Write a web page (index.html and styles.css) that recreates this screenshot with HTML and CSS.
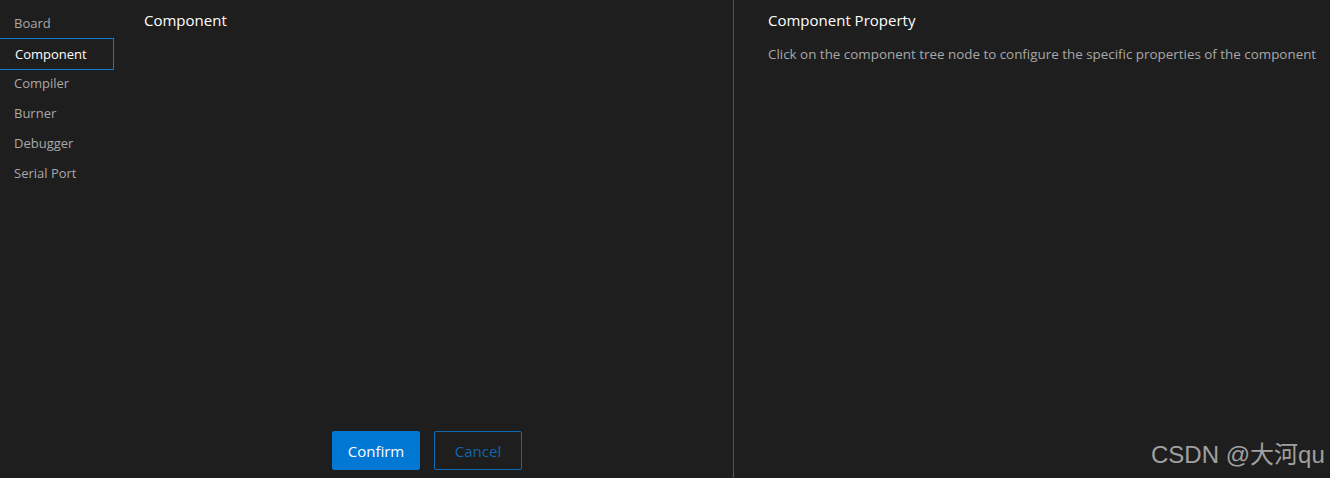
FILE: index.html
```html
<!DOCTYPE html>
<html>
<head>
<meta charset="utf-8">
<link rel="stylesheet" href="styles.css">
</head>
<body>
<div class="app">
  <nav class="nav">
    <div class="nav-item">Board</div>
    <div class="nav-item active">Component</div>
    <div class="nav-item">Compiler</div>
    <div class="nav-item">Burner</div>
    <div class="nav-item">Debugger</div>
    <div class="nav-item">Serial Port</div>
  </nav>
  <section class="middle">
    <div class="title">Component</div>
    <div class="tree"></div>
    <div class="actions">
      <button class="btn primary">Confirm</button>
      <button class="btn outline">Cancel</button>
    </div>
  </section>
  <section class="right">
    <div class="title">Component Property</div>
    <div class="desc">Click on the component tree node to configure the specific properties of the component</div>
  </section>
</div>
<div class="watermark">CSDN @大河qu</div>
</body>
</html>
```

FILE: styles.css
```css
html, body {
  margin: 0;
  padding: 0;
  background: #1e1e1e;
  height: 100%;
  overflow: hidden;
}
body {
  font-family: "Open Sans", "Noto Sans", sans-serif;
  font-size: 13px;
  color: #cccccc;
}
.app {
  display: flex;
  height: 478px;
}
.nav {
  width: 114px;
  flex: none;
  padding-top: 8px;
  display: flex;
  flex-direction: column;
}
.nav-item {
  height: 30px;
  line-height: 30px;
  padding-left: 14px;
  color: #a8a8a8;
  box-sizing: border-box;
}
.nav-item.active {
  border: 1px solid #0e7ad0;
  border-left: none;
  color: #ffffff;
  padding-left: 15px;
  height: 32px;
  line-height: 30px;
  margin: -1px 0 -1px 0;
  position: relative;
  top: 1px;
}
.middle {
  width: 620px;
  flex: none;
  box-sizing: border-box;
  border-right: 1px solid #555555;
  padding: 0 0 8px 30px;
  display: flex;
  flex-direction: column;
}
.title {
  color: #ffffff;
  font-size: 15px;
  height: 40px;
  line-height: 40px;
}
.tree {
  flex: 1;
}
.actions {
  display: flex;
  justify-content: center;
  gap: 14px;
  padding-right: 23px;
}
.btn {
  width: 88px;
  height: 39px;
  border-radius: 2px;
  font-family: inherit;
  font-size: 15px;
  box-sizing: border-box;
  cursor: pointer;
}
.btn.primary {
  background: #0078d4;
  border: 1px solid #0078d4;
  color: #ffffff;
}
.btn.outline {
  background: transparent;
  border: 1px solid #0e6ab4;
  color: #1466a8;
}
.right {
  flex: 1;
  padding-left: 34px;
}
.desc {
  color: #a8a8a8;
  font-size: 13.4px;
  line-height: 28px;
  margin-top: 0;
  white-space: nowrap;
}
.watermark {
  position: absolute;
  left: 1151px;
  top: 439px;
  font-family: "Liberation Sans", "Noto Sans CJK SC", sans-serif;
  font-size: 24px;
  color: #a0a0a0;
  line-height: 32px;
  white-space: nowrap;
}
```
